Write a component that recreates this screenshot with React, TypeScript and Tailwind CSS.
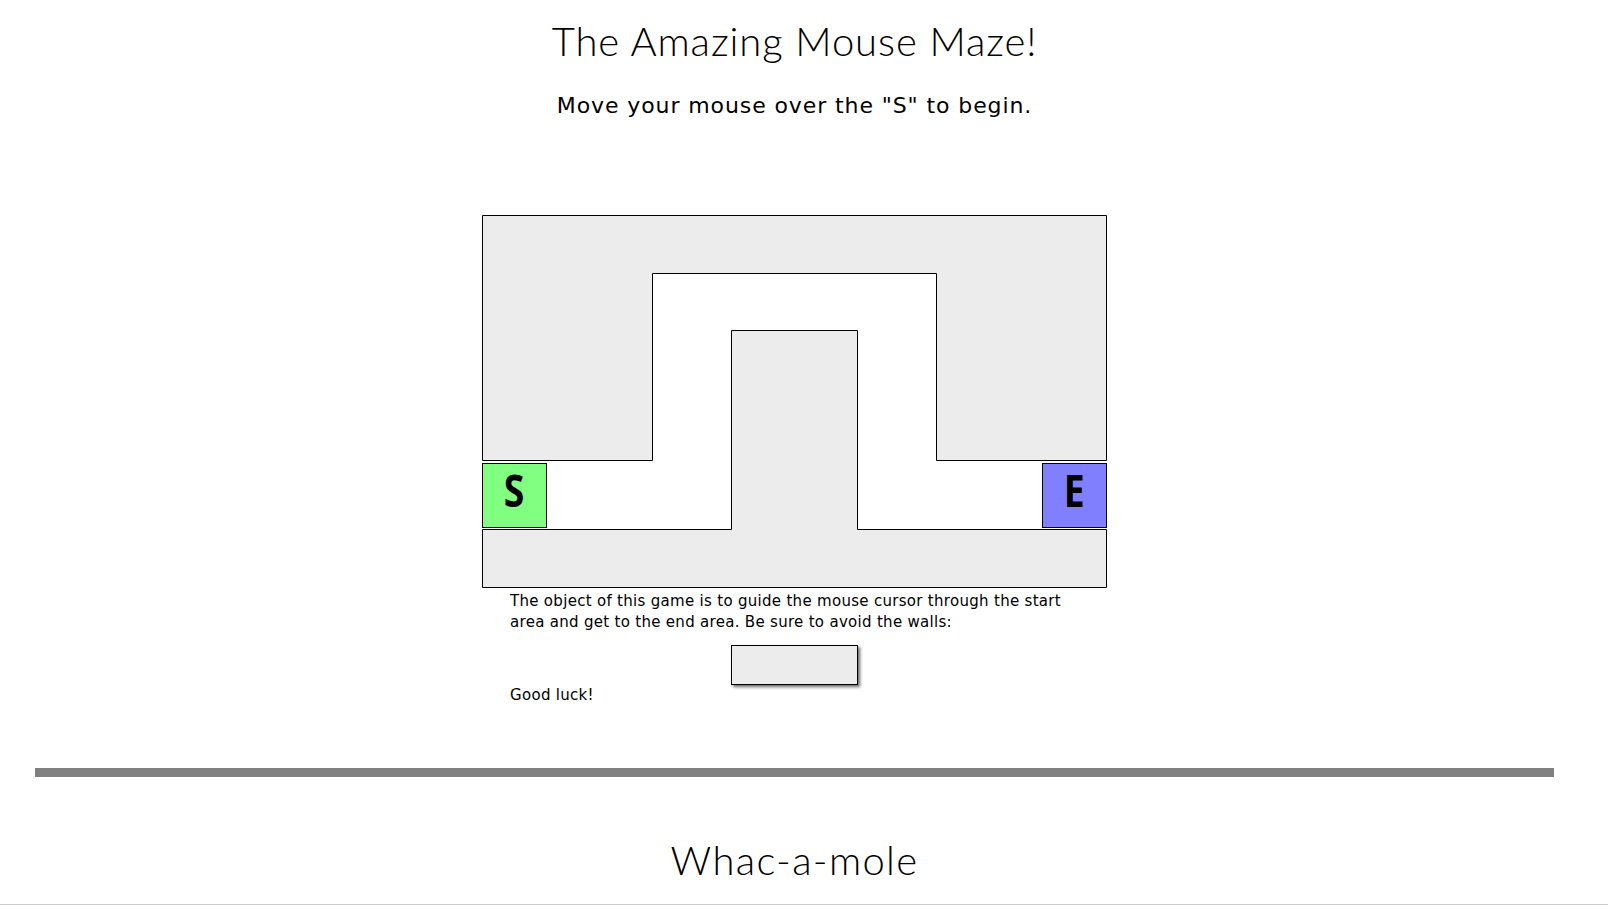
function Maze() {
  return (
    <div className="relative mt-[96px] h-[373px] w-[625px]">
      <svg className="absolute inset-0" width="625" height="373" viewBox="0 0 625 373">
        <polygon
          points="0.5,0.5 624.5,0.5 624.5,245.5 454.5,245.5 454.5,58.5 170.5,58.5 170.5,245.5 0.5,245.5"
          fill="#ececec"
          stroke="#000"
          strokeWidth="1"
        />
        <polygon
          points="0.5,314.5 249.5,314.5 249.5,115.5 375.5,115.5 375.5,314.5 624.5,314.5 624.5,372.5 0.5,372.5"
          fill="#ececec"
          stroke="#000"
          strokeWidth="1"
        />
      </svg>
      <div className="absolute left-0 top-[248px] flex h-[65px] w-[65px] justify-center border border-black bg-[#80ff80] pt-[4px]">
        <span className="font-['Open_Sans',sans-serif] text-[44px] font-bold leading-[44px] scale-x-[0.85]">S</span>
      </div>
      <div className="absolute left-[560px] top-[248px] flex h-[65px] w-[65px] justify-center border border-black bg-[#8080ff] pt-[4px]">
        <span className="font-['Open_Sans',sans-serif] text-[44px] font-bold leading-[44px] scale-x-[0.85]">E</span>
      </div>
    </div>
  )
}

export default function App() {
  return (
    <div className="h-[905px] w-full overflow-hidden bg-white text-black font-['Lato',sans-serif]">
      <div className="flex w-[1589px] flex-col items-center">
        <h1 className="mt-[17px] text-[40px] font-light leading-[48px] tracking-[0.9px]">The Amazing Mouse Maze!</h1>
        <p className="mt-[28px] font-['DejaVu_Sans',sans-serif] text-[22px] leading-[26px] tracking-[0.9px]">
          Move your mouse over the "S" to begin.
        </p>
        <Maze />
        <div className="flex w-[625px] flex-col px-[28px] font-['DejaVu_Sans',sans-serif] text-[15px] leading-[21px] tracking-[0.3px]">
          <p className="mt-[3px]">
            The object of this game is to guide the mouse cursor through the start
            <br />
            area and get to the end area. Be sure to avoid the walls:
          </p>
          <div className="mt-[12px] flex justify-center">
            <button
              type="button"
              className="h-[40px] w-[127px] border border-black bg-[#ececec] shadow-[2px_2px_3px_rgba(0,0,0,0.6)]"
            />
          </div>
          <p>Good luck!</p>
        </div>
        <div className="mt-[62px] h-[9px] w-[1519px] bg-[#808080]" />
        <h2 className="mt-[59px] text-[40px] font-light leading-[48px] tracking-[1.3px]">Whac-a-mole</h2>
      </div>
      <div className="mt-[20px] h-px w-full bg-[#cccccc]" />
    </div>
  )
}
